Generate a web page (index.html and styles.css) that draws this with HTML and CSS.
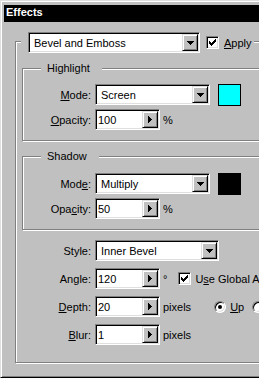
FILE: index.html
```html
<!DOCTYPE html>
<html lang="en">
<head>
  <meta charset="UTF-8">
  <title>Effects</title>
  <link rel="stylesheet" href="styles.css">
</head>
<body>
<div class="window">
  <div class="titlebar">Effects</div>

  <div class="group outer">
    <div class="group-head">
      <div class="select wide">
        <span class="select-text">Bevel and Emboss</span>
        <span class="btn"><svg width="7" height="4"><path d="M0 0h7v1H0zM1 1h5v1H1zM2 2h3v1H2zM3 3h1v1H3z"/></svg></span>
      </div>
      <span class="box apply-box"><svg width="7" height="7"><path d="M6 0h1v1H6zM5 1h2v1H5zM0 2h1v1H0zM4 2h3v1H4zM0 3h2v1H0zM3 3h3v1H3zM0 4h5v1H0zM1 5h3v1H1zM2 6h1v1H2z"/></svg></span>
      <span class="check-text"><u>A</u>pply</span>
    </div>

    <div class="group inner highlight">
      <div class="group-head">Highlight</div>
      <div class="row first">
        <span class="label"><u>M</u>ode:</span>
        <div class="select mode">
          <span class="select-text">Screen</span>
          <span class="btn"><svg width="7" height="4"><path d="M0 0h7v1H0zM1 1h5v1H1zM2 2h3v1H2zM3 3h1v1H3z"/></svg></span>
        </div>
        <span class="swatch cyan"></span>
      </div>
      <div class="row">
        <span class="label"><u>O</u>pacity:</span>
        <div class="select spin">
          <span class="spin-text">100</span>
          <span class="btn"><svg width="4" height="7"><path d="M0 0h1v7H0zM1 1h1v5H1zM2 2h1v3H2zM3 3h1v1H3z"/></svg></span>
        </div>
        <span class="unit">%</span>
      </div>
    </div>

    <div class="group inner shadow">
      <div class="group-head">Shadow</div>
      <div class="row first">
        <span class="label">Mod<u>e</u>:</span>
        <div class="select mode">
          <span class="select-text">Multiply</span>
          <span class="btn"><svg width="7" height="4"><path d="M0 0h7v1H0zM1 1h5v1H1zM2 2h3v1H2zM3 3h1v1H3z"/></svg></span>
        </div>
        <span class="swatch black"></span>
      </div>
      <div class="row">
        <span class="label">Opa<u>c</u>ity:</span>
        <div class="select spin">
          <span class="spin-text">50</span>
          <span class="btn"><svg width="4" height="7"><path d="M0 0h1v7H0zM1 1h1v5H1zM2 2h1v3H2zM3 3h1v1H3z"/></svg></span>
        </div>
        <span class="unit">%</span>
      </div>
    </div>

    <div class="row style-row">
      <span class="label">Style:</span>
      <div class="select style">
        <span class="select-text">Inner Bevel</span>
        <span class="btn"><svg width="7" height="4"><path d="M0 0h7v1H0zM1 1h5v1H1zM2 2h3v1H2zM3 3h1v1H3z"/></svg></span>
      </div>
    </div>
    <div class="row spaced">
      <span class="label">An<u>g</u>le:</span>
      <div class="select spin">
        <span class="spin-text">120</span>
        <span class="btn"><svg width="4" height="7"><path d="M0 0h1v7H0zM1 1h1v5H1zM2 2h1v3H2zM3 3h1v1H3z"/></svg></span>
      </div>
      <span class="unit">&deg;</span>
      <span class="box global-box"><svg width="7" height="7"><path d="M6 0h1v1H6zM5 1h2v1H5zM0 2h1v1H0zM4 2h3v1H4zM0 3h2v1H0zM3 3h3v1H3zM0 4h5v1H0zM1 5h3v1H1zM2 6h1v1H2z"/></svg></span>
      <span class="check-text">U<u>s</u>e Global Angle</span>
    </div>
    <div class="row spaced">
      <span class="label"><u>D</u>epth:</span>
      <div class="select spin">
        <span class="spin-text">20</span>
        <span class="btn"><svg width="4" height="7"><path d="M0 0h1v7H0zM1 1h1v5H1zM2 2h1v3H2zM3 3h1v1H3z"/></svg></span>
      </div>
      <span class="unit">pixels</span>
      <span class="radio on first-radio"></span>
      <span class="radio-text"><u>U</u>p</span>
      <span class="radio next-radio"></span>
      <span class="radio-text"><u>D</u>own</span>
    </div>
    <div class="row spaced">
      <span class="label"><u>B</u>lur:</span>
      <div class="select spin">
        <span class="spin-text">1</span>
        <span class="btn"><svg width="4" height="7"><path d="M0 0h1v7H0zM1 1h1v5H1zM2 2h1v3H2zM3 3h1v1H3z"/></svg></span>
      </div>
      <span class="unit">pixels</span>
    </div>
  </div>
</div>
</body>
</html>
```

FILE: styles.css
```css
html, body {
  margin: 0;
  overflow: hidden;
  background: #c0c0c0;
}

body {
  font-family: "Liberation Sans", Arial, sans-serif;
  font-size: 11px;
  color: #000;
}

.window {
  box-sizing: border-box;
  width: 340px;
  height: 378px;
  background: #c0c0c0;
  border: 1px solid;
  border-color: #dfdfdf #000 #000 #dfdfdf;
  box-shadow: inset 1px 1px #fff, inset -1px -1px #808080;
  padding: 4px 3px 3px;
}

.titlebar {
  height: 17px;
  background: #000;
  color: #fff;
  font-weight: bold;
  line-height: 15px;
  padding-left: 2px;
}

/* etched group boxes */
.group {
  border: 1px solid #808080;
  box-shadow: inset 1px 1px #fff, 1px 1px #fff;
}

.group-head {
  width: fit-content;
  background: #c0c0c0;
  white-space: nowrap;
}

.outer {
  margin: 19px 0 0 11px;
  padding-bottom: 17px;
}

.outer > .group-head {
  display: flex;
  align-items: center;
  height: 21px;
  margin: -10px 0 0 5px;
  padding: 0 2px 0 7px;
}

.inner {
  margin: 15px 8px 0 6px;
  padding-bottom: 10px;
}

.inner > .group-head {
  line-height: 13px;
  margin: -7px 0 0 18px;
  padding: 0 12px 0 6px;
}

.highlight .first {
  margin-top: 9px;
}

.shadow .first {
  margin-top: 10px;
}

.row {
  display: flex;
  align-items: center;
  height: 21px;
  margin-top: 4px;
  white-space: nowrap;
}

.label {
  width: 68px;
  margin-right: 4px;
  text-align: right;
}

.outer > .row .label {
  width: 75px;
}

.style-row {
  margin-top: 10px;
}

.spaced {
  margin-top: 7px;
}

/* sunken fields */
.select {
  box-sizing: border-box;
  height: 21px;
  display: flex;
  align-items: center;
  background: #fff;
  border: 1px solid;
  border-color: #808080 #fff #fff #808080;
  box-shadow: inset 1px 1px #000, inset -1px -1px #dfdfdf;
  padding: 1px;
}

.select-text {
  flex: 1;
  padding-left: 4px;
}

.spin-text {
  flex: 1;
  padding-left: 1px;
}

.wide {
  width: 172px;
}

.mode {
  width: 115px;
}

.style {
  width: 124px;
}

.spin {
  width: 65px;
}

.btn {
  box-sizing: border-box;
  width: 16px;
  height: 17px;
  display: flex;
  align-items: center;
  justify-content: center;
  background: #c0c0c0;
  border: 1px solid;
  border-color: #dfdfdf #000 #000 #dfdfdf;
  box-shadow: inset 1px 1px #fff, inset -1px -1px #808080;
}

.btn svg, .box svg {
  display: block;
}

.unit {
  margin-left: 3px;
}

.swatch {
  box-sizing: border-box;
  width: 23px;
  height: 22px;
  margin-left: 8px;
  border: 1px solid #000;
}

.cyan {
  background: #0ff;
}

.black {
  background: #000;
}

/* checkboxes and radios */
.box {
  box-sizing: border-box;
  width: 13px;
  height: 13px;
  display: flex;
  align-items: center;
  justify-content: center;
  background: #fff;
  border: 1px solid;
  border-color: #808080 #fff #fff #808080;
  box-shadow: inset 1px 1px #000, inset -1px -1px #dfdfdf;
}

.apply-box {
  margin-left: 6px;
}

.global-box {
  margin-left: 11px;
}

.check-text {
  margin-left: 5px;
}

.global-box + .check-text {
  margin-left: 4px;
}

.radio {
  box-sizing: border-box;
  width: 12px;
  height: 12px;
  display: flex;
  align-items: center;
  justify-content: center;
  border-radius: 50%;
  background: #fff;
  border: 1px solid;
  border-color: #808080 #fff #fff #808080;
  box-shadow: inset 1px 1px #000, inset -1px -1px #dfdfdf;
}

.radio.on::after {
  content: '';
  width: 4px;
  height: 4px;
  border-radius: 50%;
  background: #000;
}

.first-radio {
  margin-left: 23px;
}

.next-radio {
  margin-left: 8px;
}

.radio-text {
  margin-left: 4px;
}
```
